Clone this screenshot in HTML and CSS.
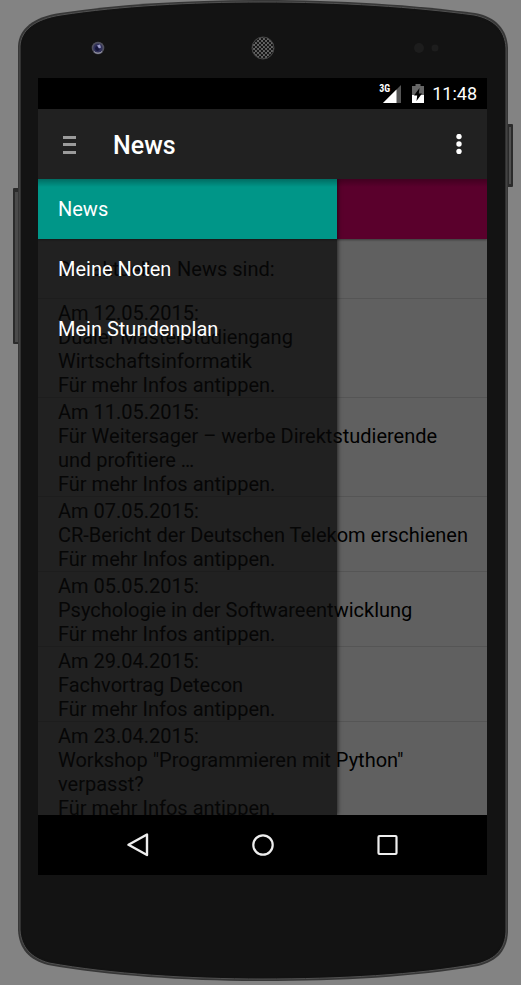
FILE: index.html
```html
<!DOCTYPE html>
<html lang="de">
<head>
<meta charset="utf-8">
<meta name="viewport" content="width=device-width, initial-scale=1">
<title>News</title>
<link rel="stylesheet" href="styles.css">
</head>
<body>
<div class="device">
  <svg class="shell" viewBox="0 0 521 985" preserveAspectRatio="none" aria-hidden="true">
    <rect x="13" y="188" width="8" height="156" rx="1" fill="#2b2b2b"/>
    <rect x="15" y="192" width="3" height="150" fill="#4a4a4a"/>
    <rect x="506" y="124" width="7" height="63" rx="1" fill="#2b2b2b"/>
    <rect x="509" y="127" width="2" height="57" fill="#505050"/>
    <path d="M18 46C19 28 34 17 60 13C120 4 190 0 262 0C340 0 415 5 475 13C496 17 507 29 508 48V932C507 950 498 961 478 966C415 977 340 981 262 981C190 981 110 976 48 965C29 960 19 949 18 930Z" fill="#373737"/>
    <path d="M20 46C21 30 35 19 61 15C120 6 190 2 262 2C340 2 415 7 474 15C494 19 505 30 506 48V932C505 948 497 959 477 964C415 975 340 979 262 979C190 979 110 974 49 963C31 958 21 947 20 930Z" fill="#131313" stroke="#505050"/>
    <path d="M22 46C23 32 36 21 62 17C120 8 190 4 262 4C340 4 415 9 473 17C492 21 503 32 504 48V932C503 946 496 957 476 962C415 973 340 977 262 977C190 977 110 972 50 961C33 956 23 945 22 930Z" fill="#131313"/>
  </svg>
  <header class="bezel">
    <svg class="camera" viewBox="0 0 14 14" aria-hidden="true">
      <circle cx="7" cy="7" r="6.300" fill="#50505e"/>
      <circle cx="7" cy="7" r="4.600" fill="#30305a"/>
      <circle cx="6.500" cy="7.500" r="2.400" fill="#15153a"/>
      <path d="M6 4.500l3-1 1 3-2 1z" fill="#9c9cc8"/>
      <path d="M3 10.500a5.500 5.500 0 0 0 8 0" fill="none" stroke="#a0a0b0"/>
    </svg>
    <svg class="speaker" viewBox="0 0 24 24" aria-hidden="true">
      <defs>
        <pattern id="mesh" width="4" height="4" patternUnits="userSpaceOnUse">
          <rect width="4" height="4" fill="#666"/>
          <circle cx="1" cy="1" r="1.200" fill="#141414"/>
          <circle cx="3" cy="3" r="1.200" fill="#141414"/>
        </pattern>
      </defs>
      <circle cx="12" cy="12" r="11" fill="url(#mesh)" stroke="#444"/>
    </svg>
    <svg class="sensors" viewBox="0 0 26 12" aria-hidden="true">
      <circle cx="6" cy="6" r="5" fill="#1d1d1d"/>
      <circle cx="22" cy="6" r="3.500" fill="#1d1d1d"/>
    </svg>
  </header>
  <div class="screen">
    <div class="status">
      <span class="network">3G</span>
      <svg class="signal" viewBox="0 0 18 18" aria-hidden="true">
        <path d="M18 0V18H0Z" fill="#555"/>
        <path d="M13.500 4.500V18H0Z" fill="#fff"/>
      </svg>
      <svg class="battery" viewBox="0 0 12 19" aria-hidden="true">
        <path d="M3.500 0h5v2H12v17H0V2h3.500z" fill="#666"/>
        <path d="M0 11h12v8H0z" fill="#fff"/>
        <path d="M7.500 4L2 11.500h3.200L4.500 17 10 9.500H6.800z" fill="#000"/>
      </svg>
      <time>11:48</time>
    </div>
    <div class="appbar">
      <button class="icon-button" aria-label="Navigation">
        <svg width="13" height="18" viewBox="0 0 13 18"><path d="M0 0h13v3H0zM0 7h13v3H0zM0 15h13v3H0z" fill="#9b9b9b"/></svg>
      </button>
      <h1>News</h1>
      <button class="icon-button more" aria-label="Weitere Optionen">
        <svg width="6" height="20" viewBox="0 0 6 20"><circle cx="3" cy="2.500" r="2.700" fill="#fff"/><circle cx="3" cy="10" r="2.700" fill="#fff"/><circle cx="3" cy="17.500" r="2.700" fill="#fff"/></svg>
      </button>
    </div>
    <main class="content">
      <div class="banner"></div>
      <ul class="news">
        <li class="intro">Die aktuellen News sind:</li>
        <li>Am 12.05.2015:<br>Dualer Masterstudiengang<br>Wirtschaftsinformatik<br>Für mehr Infos antippen.</li>
        <li>Am 11.05.2015:<br>Für Weitersager – werbe Direktstudierende<br>und profitiere …<br>Für mehr Infos antippen.</li>
        <li>Am 07.05.2015:<br>CR-Bericht der Deutschen Telekom erschienen<br>Für mehr Infos antippen.</li>
        <li>Am 05.05.2015:<br>Psychologie in der Softwareentwicklung<br>Für mehr Infos antippen.</li>
        <li>Am 29.04.2015:<br>Fachvortrag Detecon<br>Für mehr Infos antippen.</li>
        <li>Am 23.04.2015:<br>Workshop "Programmieren mit Python"<br>verpasst?<br>Für mehr Infos antippen.</li>
      </ul>
      <nav class="drawer">
        <a class="active" href="#news">News</a>
        <a href="#noten">Meine Noten</a>
        <a href="#stundenplan">Mein Stundenplan</a>
      </nav>
    </main>
    <footer class="navbar">
      <button aria-label="Zurück"><svg width="24" height="24" viewBox="0 0 24 24"><path d="M22 1.500V22L3.500 11.800Z" fill="none" stroke="#eee" stroke-width="2.400" stroke-linejoin="round"/></svg></button>
      <button aria-label="Startseite"><svg width="24" height="24" viewBox="0 0 24 24"><circle cx="12" cy="12" r="9.700" fill="none" stroke="#eee" stroke-width="2.200"/></svg></button>
      <button aria-label="Übersicht"><svg width="24" height="24" viewBox="0 0 24 24"><rect x="2.500" y="3" width="18" height="18" rx="1" fill="none" stroke="#eee" stroke-width="2.200"/></svg></button>
    </footer>
  </div>
</div>
</body>
</html>
```
FILE: styles.css
```css
* {
  box-sizing: border-box;
}

body {
  margin: 0;
  background: #838383;
  font-family: Roboto, "Liberation Sans", sans-serif;
  font-size: 20px;
  line-height: 24px;
}

.device {
  position: relative;
  display: flex;
  flex-direction: column;
  min-height: 100vh;
  padding: 0 34px 110px 38px;
}

.shell {
  position: absolute;
  inset: 0;
  width: 100%;
  height: 100%;
}

.bezel {
  position: relative;
  display: grid;
  grid-template-columns: 1fr auto 1fr;
  align-items: center;
  height: 78px;
  padding: 17px 48px 0;
}

.camera {
  width: 14px;
  height: 14px;
  margin-left: 5px;
}

.speaker {
  width: 24px;
  height: 24px;
}

.sensors {
  width: 26px;
  height: 12px;
  justify-self: end;
}

.screen {
  position: relative;
  display: flex;
  flex: 1;
  flex-direction: column;
  background: #212121;
}

.status {
  display: flex;
  align-items: center;
  justify-content: flex-end;
  height: 31px;
  padding: 0 10px;
  background: #000;
  color: #fff;
  font-size: 18px;
}

.network {
  align-self: flex-start;
  margin-right: -7px;
  padding-top: 5px;
  font-family: "Roboto Condensed", Roboto, sans-serif;
  font-size: 10px;
  font-weight: 700;
  line-height: 12px;
}

.signal {
  width: 18px;
  height: 18px;
}

.battery {
  width: 12px;
  height: 19px;
  margin: 0 8px 0 11px;
}

.appbar {
  display: flex;
  align-items: center;
  height: 70px;
  padding: 2px 20px 0;
}

button {
  display: flex;
  align-items: center;
  justify-content: center;
  padding: 0;
  border: 0;
  background: none;
}

.icon-button {
  width: 22px;
  height: 40px;
}

.more {
  width: 16px;
  padding-bottom: 2px;
}

h1 {
  flex: 1;
  margin: 0 0 0 33px;
  padding-top: 1px;
  color: #fff;
  font-size: 25px;
  font-weight: 500;
  line-height: 30px;
}

.content {
  position: relative;
  flex: 1 0 0;
  overflow: hidden;
  background: #606060;
}

.content::after {
  content: "";
  position: absolute;
  inset: 0 0 auto;
  height: 8px;
  background: linear-gradient(rgba(0, 0, 0, 0.28), transparent);
}

.banner {
  height: 60px;
  background: #5a002c;
  box-shadow: 0 1px 2px rgba(0, 0, 0, 0.4);
}

.news {
  margin: 0;
  padding: 0;
  list-style: none;
}

.news li {
  padding: 2px 20px 0;
  border-bottom: 1px solid #555;
  white-space: nowrap;
}

.news .intro {
  padding: 18px 20px 17px;
}

.drawer {
  position: absolute;
  inset: 0 auto 0 0;
  width: 66.6%;
  background: rgba(8, 8, 8, 0.72);
  box-shadow: 1px 0 4px rgba(0, 0, 0, 0.6);
}

.drawer a {
  display: block;
  padding: 18px 20px;
  color: #fff;
  text-decoration: none;
}

.drawer .active {
  background: #009688;
}

.navbar {
  display: flex;
  justify-content: center;
  height: 60px;
  background: #000;
}

.navbar button {
  width: 28%;
}
```
